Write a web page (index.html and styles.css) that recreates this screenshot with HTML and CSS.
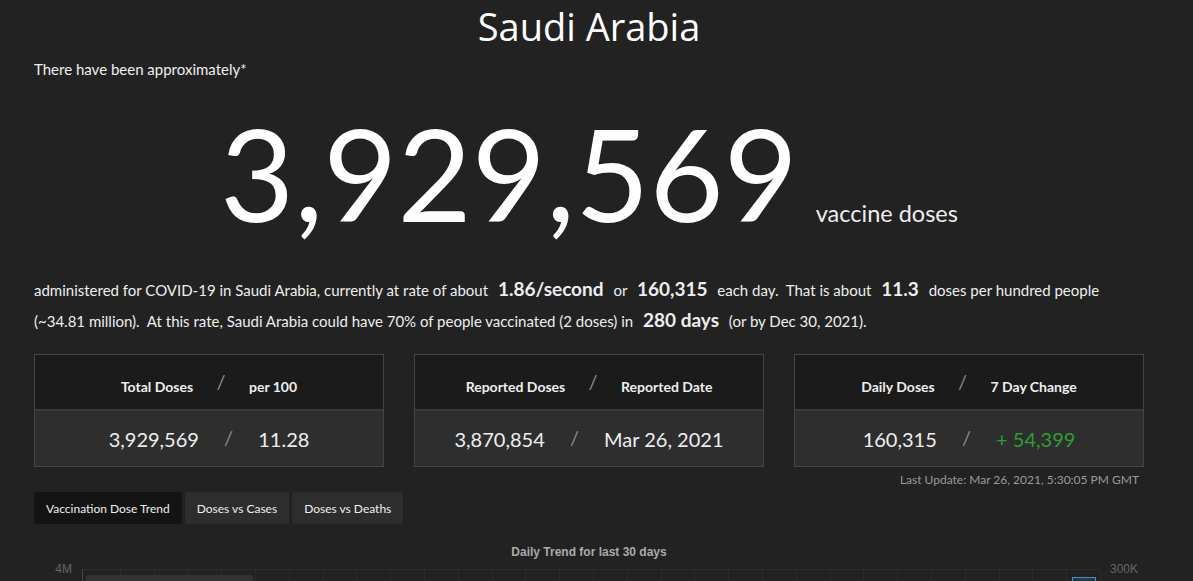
FILE: index.html
```html
<!DOCTYPE html>
<html>
<head>
<meta charset="utf-8">
<title>Saudi Arabia - COVID-19 Vaccine Tracker</title>
<link rel="stylesheet" href="styles.css">
</head>
<body>

<div class="container">

<h1 class="country">Saudi Arabia</h1>
<p class="lead">There have been approximately*</p>

<div class="headline">
    <span class="big-number">3,929,569</span>
    <span class="big-label">vaccine doses</span>
</div>

<p class="summary">
    administered for COVID-19 in Saudi Arabia, currently at rate of about
    <b>1.86/second</b> or <b>160,315</b> each day.&nbsp; That is about
    <b>11.3</b> doses per hundred people<br>
    (~34.81 million).&nbsp; At this rate, Saudi Arabia could have 70% of people
    vaccinated (2 doses) in <b>280 days</b> (or by Dec 30, 2021).
</p>

<div class="stats">
    <div class="stat">
        <div class="stat-head">Total Doses <span class="sep">/</span> per 100</div>
        <div class="stat-body">3,929,569 <span class="sep">/</span> 11.28</div>
    </div>
    <div class="stat">
        <div class="stat-head">Reported Doses <span class="sep">/</span> Reported Date</div>
        <div class="stat-body">3,870,854 <span class="sep">/</span> Mar 26, 2021</div>
    </div>
    <div class="stat">
        <div class="stat-head">Daily Doses <span class="sep">/</span> 7 Day Change</div>
        <div class="stat-body">160,315 <span class="sep">/</span> <span class="up">+ 54,399</span></div>
    </div>
</div>

<div class="updated">Last Update: Mar 26, 2021, 5:30:05 PM GMT</div>

<div class="tabs">
    <button type="button" class="tab active">Vaccination Dose Trend</button>
    <button type="button" class="tab">Doses vs Cases</button>
    <button type="button" class="tab">Doses vs Deaths</button>
</div>

<div class="chart">
    <div class="chart-title">Daily Trend for last 30 days</div>
    <svg class="chart-plot" width="1110" height="40" viewBox="0 0 1110 40">
        <!-- axis labels -->
        <text x="38" y="18" text-anchor="end" class="axis">4M</text>
        <text x="1104" y="18" text-anchor="end" class="axis">300K</text>
        <!-- grid -->
        <line x1="48" y1="14.5" x2="1066" y2="14.5" class="grid"/>
        <line x1="48.5" y1="14" x2="48.5" y2="40" class="axis-line"/>
        <g class="grid">
            <line x1="86.5" y1="14" x2="86.5" y2="40"/>
            <line x1="120.5" y1="14" x2="120.5" y2="40"/>
            <line x1="153.5" y1="14" x2="153.5" y2="40"/>
            <line x1="187.5" y1="14" x2="187.5" y2="40"/>
            <line x1="221.5" y1="14" x2="221.5" y2="40"/>
            <line x1="255.5" y1="14" x2="255.5" y2="40"/>
            <line x1="289.5" y1="14" x2="289.5" y2="40"/>
            <line x1="322.5" y1="14" x2="322.5" y2="40"/>
            <line x1="356.5" y1="14" x2="356.5" y2="40"/>
            <line x1="390.5" y1="14" x2="390.5" y2="40"/>
            <line x1="424.5" y1="14" x2="424.5" y2="40"/>
            <line x1="458.5" y1="14" x2="458.5" y2="40"/>
            <line x1="491.5" y1="14" x2="491.5" y2="40"/>
            <line x1="525.5" y1="14" x2="525.5" y2="40"/>
            <line x1="559.5" y1="14" x2="559.5" y2="40"/>
            <line x1="593.5" y1="14" x2="593.5" y2="40"/>
            <line x1="627.5" y1="14" x2="627.5" y2="40"/>
            <line x1="660.5" y1="14" x2="660.5" y2="40"/>
            <line x1="694.5" y1="14" x2="694.5" y2="40"/>
            <line x1="728.5" y1="14" x2="728.5" y2="40"/>
            <line x1="762.5" y1="14" x2="762.5" y2="40"/>
            <line x1="796.5" y1="14" x2="796.5" y2="40"/>
            <line x1="829.5" y1="14" x2="829.5" y2="40"/>
            <line x1="863.5" y1="14" x2="863.5" y2="40"/>
            <line x1="897.5" y1="14" x2="897.5" y2="40"/>
            <line x1="931.5" y1="14" x2="931.5" y2="40"/>
            <line x1="965.5" y1="14" x2="965.5" y2="40"/>
            <line x1="998.5" y1="14" x2="998.5" y2="40"/>
            <line x1="1032.5" y1="14" x2="1032.5" y2="40"/>
            <line x1="1066.5" y1="14" x2="1066.5" y2="40"/>
        </g>
        <!-- legend box and latest bar -->
        <rect x="52" y="20" width="167" height="30" rx="3" class="legend"/>
        <rect x="1038.5" y="22.5" width="23" height="30" class="bar"/>
    </svg>
</div>

</div>

</body>
</html>
```

FILE: styles.css
```css
html {
  background: #222222;
}

body {
  color: #eeeeee;
  font: 400 15px/1.5 "Lato", "Liberation Sans", sans-serif;
  margin: 0;
  overflow: hidden;
}

.container {
  width: 1110px;
  margin: 0 0 0 34px;
}

.country {
  font: 400 38px/1.2 "Open Sans", sans-serif;
  text-align: center;
  margin: 0;
  padding-top: 4px;
  color: #ffffff;
}

.lead {
  margin: 8px 0 0;
  font-size: 15px;
}

.headline {
  text-align: center;
  margin-top: -4px;
  padding-top: 17px;
  height: 181px;
}

.big-number {
  font: 400 128px/1.25 "Lato", sans-serif;
  color: #ffffff;
}

.big-label {
  font-size: 23.5px;
  margin-left: 14px;
}

.summary {
  margin: 0;
  line-height: 30px;
}

.summary b {
  font-size: 19px;
  font-weight: 700;
  margin: 0 6px;
}

.stats {
  display: flex;
  justify-content: space-between;
  margin-top: 18px;
}

.stat {
  width: 348px;
  border: 1px solid #444444;
  text-align: center;
}

.stat-head {
  background: #1b1b1b;
  height: 54px;
  line-height: 58px;
  font-size: 14px;
  font-weight: 700;
  border-bottom: 2px solid #3a3a3a;
}

.stat-body {
  background: #2e2e2e;
  height: 55px;
  line-height: 56px;
  font-size: 20px;
}

.sep {
  color: #8a8a8a;
  font-weight: 400;
  margin: 0 20px;
  position: relative;
  top: -2px;
}

.stat-head .sep {
  font-size: 20px;
  top: -3px;
}

.up {
  color: #2e9e2e;
}

.updated {
  text-align: right;
  padding-right: 5px;
  font-size: 12px;
  color: #9a9a9a;
  margin-top: 4px;
}

.tabs {
  display: flex;
  gap: 3px;
  margin-top: 3px;
}

.tab {
  font: 400 12px "Lato", sans-serif;
  color: #eeeeee;
  background: #2d2d2d;
  border: 0;
  border-radius: 3px;
  height: 32px;
  padding: 0 12px;
}

.tab.active {
  background: #141414;
}

.chart {
  margin-top: 21px;
}

.chart-title {
  text-align: center;
  font: 700 12px "Liberation Sans", sans-serif;
  color: #aaaaaa;
}

.chart-plot {
  display: block;
  margin-top: -4px;
}

.axis {
  font: 400 12px "Liberation Sans", sans-serif;
  fill: #666666;
}

.grid line, line.grid {
  stroke: #2c2c2c;
  stroke-width: 1;
}

.axis-line {
  stroke: #444444;
}

.legend {
  fill: #333333;
}

.bar {
  fill: #28394a;
  stroke: #4a8fc4;
  stroke-width: 1;
}
```
